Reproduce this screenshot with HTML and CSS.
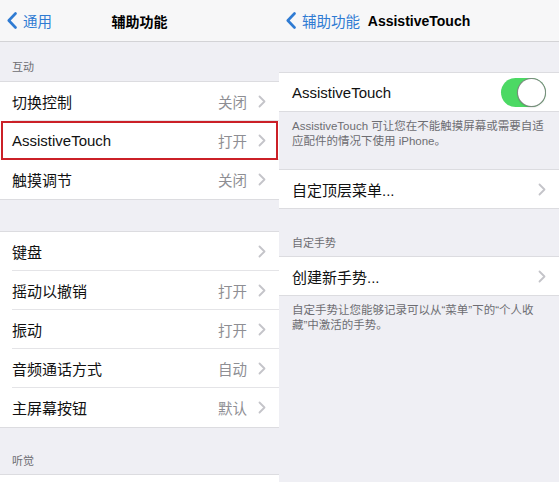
FILE: index.html
```html
<!DOCTYPE html>
<html lang="zh-CN">
     <head>
          <meta http-equiv="Content-type" content="text/html; charset=utf-8">
          <title>辅助功能 - AssistiveTouch</title>
          <link rel="stylesheet" href="styles.css">
     </head>
     <body>
          <div class="screens">
               <!-- left: accessibility list -->
               <div class="screen screen-left">
                    <div class="navbar">
                         <div class="back">
                              <svg class="back-arrow" width="10" height="17" viewBox="0 0 10 17"><polyline points="8.5,1.5 1.8,8.5 8.5,15.5"/></svg>
                              <span>通用</span>
                         </div>
                         <div class="nav-title">辅助功能</div>
                    </div>
                    <div class="group-title">互动</div>
                    <div class="group">
                         <div class="cell"><span class="label">切换控制</span><span class="detail">关闭</span><svg class="chevron" width="8" height="13" viewBox="0 0 8 13"><polyline points="1.5,1.5 6.5,6.5 1.5,11.5"/></svg></div>
                         <div class="cell marked"><span class="label">AssistiveTouch</span><span class="detail">打开</span><svg class="chevron" width="8" height="13" viewBox="0 0 8 13"><polyline points="1.5,1.5 6.5,6.5 1.5,11.5"/></svg></div>
                         <div class="cell"><span class="label">触摸调节</span><span class="detail">关闭</span><svg class="chevron" width="8" height="13" viewBox="0 0 8 13"><polyline points="1.5,1.5 6.5,6.5 1.5,11.5"/></svg></div>
                    </div>
                    <div class="spacer"></div>
                    <div class="group">
                         <div class="cell"><span class="label">键盘</span><span class="detail"></span><svg class="chevron" width="8" height="13" viewBox="0 0 8 13"><polyline points="1.5,1.5 6.5,6.5 1.5,11.5"/></svg></div>
                         <div class="cell"><span class="label">摇动以撤销</span><span class="detail">打开</span><svg class="chevron" width="8" height="13" viewBox="0 0 8 13"><polyline points="1.5,1.5 6.5,6.5 1.5,11.5"/></svg></div>
                         <div class="cell"><span class="label">振动</span><span class="detail">打开</span><svg class="chevron" width="8" height="13" viewBox="0 0 8 13"><polyline points="1.5,1.5 6.5,6.5 1.5,11.5"/></svg></div>
                         <div class="cell"><span class="label">音频通话方式</span><span class="detail">自动</span><svg class="chevron" width="8" height="13" viewBox="0 0 8 13"><polyline points="1.5,1.5 6.5,6.5 1.5,11.5"/></svg></div>
                         <div class="cell"><span class="label">主屏幕按钮</span><span class="detail">默认</span><svg class="chevron" width="8" height="13" viewBox="0 0 8 13"><polyline points="1.5,1.5 6.5,6.5 1.5,11.5"/></svg></div>
                    </div>
                    <div class="group-title tall">听觉</div>
                    <div class="group">
                         <div class="cell"></div>
                    </div>
               </div>

               <!-- right: AssistiveTouch detail -->
               <div class="screen screen-right">
                    <div class="navbar">
                         <div class="back">
                              <svg class="back-arrow" width="10" height="17" viewBox="0 0 10 17"><polyline points="8.5,1.5 1.8,8.5 8.5,15.5"/></svg>
                              <span>辅助功能</span>
                         </div>
                         <div class="nav-title">AssistiveTouch</div>
                    </div>
                    <div class="spacer small"></div>
                    <div class="group">
                         <div class="cell short"><span class="label">AssistiveTouch</span><span class="switch on"><span class="knob"></span></span></div>
                    </div>
                    <div class="footnote first">AssistiveTouch 可让您在不能触摸屏幕或需要自适应配件的情况下使用 iPhone。</div>
                    <div class="group">
                         <div class="cell short"><span class="label">自定顶层菜单...</span><span class="detail"></span><svg class="chevron" width="8" height="13" viewBox="0 0 8 13"><polyline points="1.5,1.5 6.5,6.5 1.5,11.5"/></svg></div>
                    </div>
                    <div class="group-title tall">自定手势</div>
                    <div class="group">
                         <div class="cell short"><span class="label">创建新手势...</span><span class="detail"></span><svg class="chevron" width="8" height="13" viewBox="0 0 8 13"><polyline points="1.5,1.5 6.5,6.5 1.5,11.5"/></svg></div>
                    </div>
                    <div class="footnote">自定手势让您能够记录可以从“菜单”下的“个人收藏”中激活的手势。</div>
               </div>
          </div>
     </body>
</html>
```

FILE: styles.css
```css
html, body{
     margin: 0;
     padding: 0;
     height: 100%;
     overflow: hidden;
}
body{
     font-family: "Liberation Sans", "Noto Sans CJK SC", sans-serif;
     color: #111;
     background-color: #efeff4;
}
.screens{
     display: flex;
     height: 482px;
     overflow: hidden;
}
.screen{
     display: flex;
     flex-direction: column;
     background-color: #efeff4;
     overflow: hidden;
}
.screen-left{
     width: 279px;
     --inset: 12px;
}
.screen-right{
     width: 280px;
     --inset: 13px;
}

/* nav bar */
.navbar{
     height: 41px;
     flex-shrink: 0;
     display: grid;
     grid-template-columns: 1fr auto 1fr;
     align-items: center;
     background-color: #f7f7f8;
     border-bottom: 1px solid #d3d3d6;
}
.back{
     display: flex;
     align-items: center;
     gap: 6px;
     padding-left: 7px;
     color: #2f7bd3;
     font-size: 14.5px;
     white-space: nowrap;
}
.back-arrow{
     display: block;
     fill: none;
     stroke: #2f7bd3;
     stroke-width: 2.6;
     stroke-linecap: round;
     stroke-linejoin: round;
}
.nav-title{
     font-size: 14px;
     font-weight: bold;
     color: #000;
     white-space: nowrap;
}

/* groups */
.group-title{
     height: 39px;
     flex-shrink: 0;
     box-sizing: border-box;
     display: flex;
     align-items: flex-end;
     padding: 0 0 7px var(--inset);
     font-size: 11px;
     line-height: 13px;
     color: #6d6d72;
}
.group-title.tall{
     height: 46px;
     padding-bottom: 6px;
}
.screen-right .group-title.tall{
     height: 47px;
}
.spacer{
     height: 31px;
     flex-shrink: 0;
}
.spacer.small{
     height: 30px;
}
.group{
     flex-shrink: 0;
     background-color: #fff;
     border-top: 1px solid #dcdce0;
     border-bottom: 1px solid #dcdce0;
}
.cell{
     position: relative;
     height: 39px;
     box-sizing: border-box;
     margin-left: var(--inset);
     padding-right: 13px;
     display: flex;
     align-items: center;
     border-bottom: 1px solid #e4e4e7;
}
.cell:last-child{
     border-bottom: none;
}
.cell.short{
     height: 38px;
}
.label{
     flex: 1;
     font-size: 15px;
     color: #111;
     white-space: nowrap;
}
.detail{
     font-size: 14.5px;
     color: #8e8e93;
     margin-right: 11px;
}
.chevron{
     display: block;
     fill: none;
     stroke: #c4c4c9;
     stroke-width: 1.8;
     stroke-linecap: round;
     stroke-linejoin: round;
}

/* red highlight box over the AssistiveTouch row */
.cell.marked::after{
     content: "";
     position: absolute;
     top: 0;
     bottom: -1px;
     left: -11px;
     right: 1px;
     border: 2px solid #cb2027;
}

/* switch */
.switch{
     width: 45px;
     height: 29px;
     box-sizing: border-box;
     border-radius: 15px;
     background-color: #4cd964;
     display: flex;
     justify-content: flex-end;
     align-items: center;
     padding: 1px;
}
.knob{
     width: 27px;
     height: 27px;
     border-radius: 50%;
     background-color: #fff;
     box-shadow: 0 0 0 1px #7d8a80, 0 1px 2px rgba(0, 0, 0, 0.3);
     box-sizing: border-box;
}

/* footer notes */
.footnote{
     flex-shrink: 0;
     padding: 7px 12px 20px var(--inset);
     font-size: 11.5px;
     line-height: 15px;
     color: #6d6d72;
}
```
